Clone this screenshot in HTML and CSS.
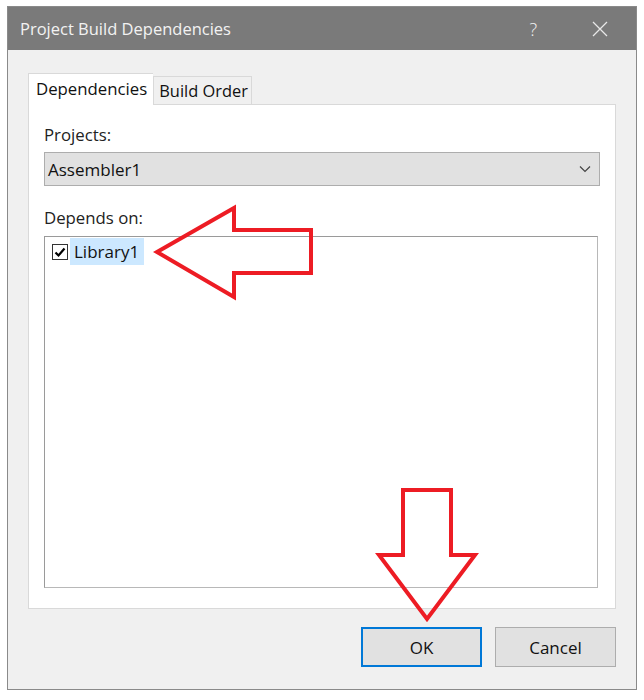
FILE: index.html
```html
<!DOCTYPE html>
<html lang="en">
<head>
    <meta charset="UTF-8">
    <title>Project Build Dependencies</title>
    <link rel="stylesheet" href="styles.css">
</head>
<body>
    <!-- 对话框窗口 -->
    <div class="window">
        <!-- 标题栏 -->
        <div class="titlebar">
            <span class="title">Project Build Dependencies</span>
            <span class="help">?</span>
            <svg class="close" width="16" height="16" viewBox="0 0 16 16">
                <path d="M1 1 L15 15 M15 1 L1 15" stroke="#e8e8e8" stroke-width="1.3" fill="none"/>
            </svg>
        </div>

        <div class="content">
            <!-- 选项卡 -->
            <div class="tabs">
                <div class="tab active">Dependencies</div>
                <div class="tab">Build Order</div>
            </div>

            <div class="panel">
                <div class="label">Projects:</div>
                <div class="combo">
                    <span>Assembler1</span>
                    <svg width="12" height="8" viewBox="0 0 12 8">
                        <path d="M1 1.5 L6 6.5 L11 1.5" stroke="#444" stroke-width="1.2" fill="none"/>
                    </svg>
                </div>

                <div class="label label-dep">Depends on:</div>
                <div class="list">
                    <div class="item">
                        <span class="check">
                            <svg width="12" height="12" viewBox="0 0 12 12">
                                <path d="M1.5 6.5 L4.5 9.5 L10.5 2.5" stroke="#000" stroke-width="2.2" fill="none"/>
                            </svg>
                        </span>
                        <span class="name">Library1</span>
                    </div>
                </div>
            </div>

            <div class="buttons">
                <button class="btn btn-ok">OK</button>
                <button class="btn">Cancel</button>
            </div>
        </div>

        <!-- 红色箭头标注 -->
        <svg class="marks" width="644" height="700" viewBox="0 0 644 700">
            <polygon points="157,252 234,208 234,230 311,230 311,273 234,273 234,297"
                     fill="none" stroke="#ed1c24" stroke-width="4" stroke-linejoin="miter"/>
            <polygon points="403,490 451,490 451,555 475,555 427,619 379,555 403,555"
                     fill="none" stroke="#ed1c24" stroke-width="4" stroke-linejoin="miter"/>
        </svg>
    </div>
</body>
</html>
```

FILE: styles.css
```css
*{
    margin: 0;
    padding: 0;
    box-sizing: border-box;
}

body{
    background-color: #fff;
    font-family: "Open Sans", "Noto Sans", sans-serif;
    font-size: 16.8px;
    color: #111;
}

/* 窗口 */
.window{
    position: relative;
    width: 630px;
    height: 684px;
    margin: 6px 0 0 7px;
    border: 1px solid #8a8a8a;
    background-color: #f0f0f0;
}

/* 标题栏 */
.titlebar{
    display: flex;
    align-items: center;
    height: 43px;
    background-color: #7a7a7a;
    color: #f2f2f2;
    padding-left: 12px;
}

.title{
    flex: 1;
    font-size: 16.5px;
}

.help{
    font-size: 18px;
    font-weight: 300;
    margin-right: 55px;
}

.close{
    margin-right: 28px;
}

/* 内容区 */
.content{
    padding: 23px 20px 0 20px;
}

.tabs{
    display: flex;
    align-items: flex-end;
    height: 31px;
    position: relative;
    z-index: 1;
}

.tab{
    height: 28px;
    padding: 0 3px 0 5px;
    border: 1px solid #d9d9d9;
    border-bottom: none;
    background-color: #f0f0f0;
    line-height: 28px;
    font-size: 16.4px;
}

.tab.active{
    height: 32px;
    margin-bottom: -1px;
    padding: 0 6px 0 7px;
    background-color: #fff;
    border-right: none;
    line-height: 30px;
    font-size: 16.8px;
}

.panel{
    height: 505px;
    border: 1px solid #d9d9d9;
    background-color: #fff;
    padding: 19px 15px 0 15px;
}

.label{
    line-height: 22px;
    color: #222;
}

.label-dep{
    margin-top: 21px;
}

/* 下拉框 */
.combo{
    display: flex;
    align-items: center;
    justify-content: space-between;
    height: 34px;
    margin-top: 6px;
    padding: 0 8px 0 3px;
    background-color: #e1e1e1;
    border: 1px solid #adadad;
    font-size: 17px;
}

/* 列表 */
.list{
    width: 554px;
    height: 352px;
    margin-top: 7px;
    border: 1px solid #9a9a9a;
    border-right-color: #b8b8b8;
    border-bottom-color: #b8b8b8;
    padding: 1px 0 0 7px;
}

.item{
    display: flex;
    align-items: center;
    height: 27px;
}

.check{
    display: flex;
    align-items: center;
    justify-content: center;
    width: 16px;
    height: 16px;
    border: 1px solid #333;
    background-color: #fff;
}

.name{
    margin-left: 2px;
    padding: 0 5px 0 4px;
    line-height: 27px;
    background-color: #cce8ff;
    font-size: 17px;
}

/* 按钮 */
.buttons{
    display: flex;
    justify-content: flex-end;
    gap: 13px;
    margin-top: 18px;
}

.btn{
    width: 121px;
    height: 40px;
    background-color: #e1e1e1;
    border: 1px solid #adadad;
    font-family: inherit;
    font-size: 17px;
    color: #111;
}

.btn-ok{
    border: 2px solid #0078d7;
}

/* 标注 */
.marks{
    position: absolute;
    left: -8px;
    top: -7px;
    pointer-events: none;
}
```
